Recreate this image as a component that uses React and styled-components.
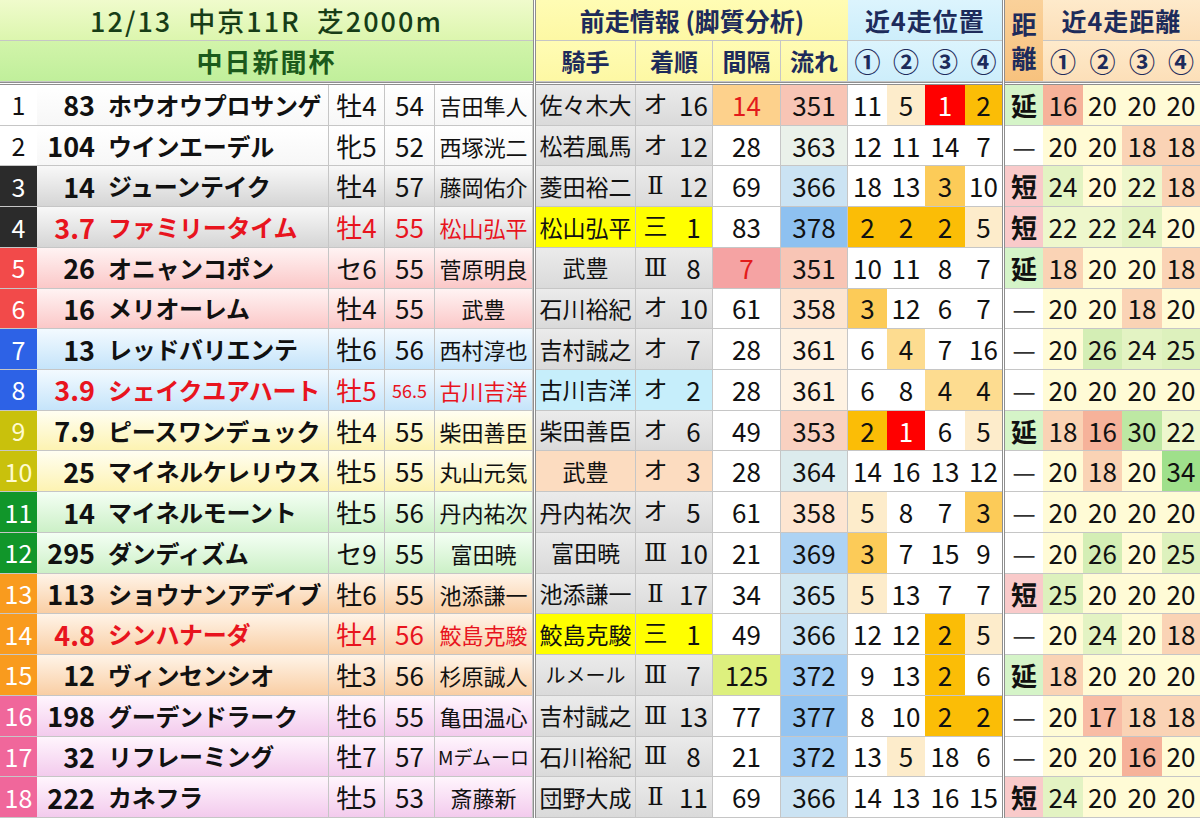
import React from 'react'
import styled, { createGlobalStyle } from 'styled-components'

const GlobalStyle = createGlobalStyle`
  html, body {
    margin: 0;
    padding: 0;
    background: #fff;
  }
  body {
    font-family: "Noto Sans CJK JP", "Noto Sans", sans-serif;
    color: #111;
  }
`

const LINE = '#c6c6c6'
const RED = '#e8141e'
const NAVY = '#1d2b5b'

const WAKU = {
  1: { box: '#ffffff', fg: '#111', row: 'linear-gradient(#ffffff, #f7f7f7)' },
  2: { box: '#2b2b2b', fg: '#fff', row: 'linear-gradient(#f8f8f8, #d5d5d5)' },
  3: { box: '#f24a4a', fg: '#fff', row: 'linear-gradient(#fff3f3, #fbc8c8)' },
  4: { box: '#2d62e6', fg: '#fff', row: 'linear-gradient(#f3faff, #c5e4fa)' },
  5: { box: '#c9c10c', fg: '#fffbd0', row: 'linear-gradient(#fffef2, #fdf3b2)' },
  6: { box: '#11962a', fg: '#fff', row: 'linear-gradient(#f4fff4, #ccf0c7)' },
  7: { box: '#f99b1e', fg: '#fff', row: 'linear-gradient(#fff4e8, #f9cea4)' },
  8: { box: '#f0679b', fg: '#fff', row: 'linear-gradient(#fff5fd, #f3cbed)' },
}

const PREV_BG = {
  gray: 'linear-gradient(#ebebeb, #dadada)',
  win: '#ffff00',
  blue: '#c6eefb',
  peach: '#fcdcc0',
}

const GAP_BG = {
  warm: '#fdd18c',
  hot: '#f5a3a3',
  lime: '#ddf07e',
}

const FLOW_BG = {
  351: '#f8c5b5', 353: '#f9d1c1', 358: '#fde5d1', 361: '#fef2e2', 363: '#eaf1ea',
  364: '#dcebed', 365: '#d2e7f1', 366: '#cbe3f3', 369: '#aed3f3', 372: '#a1ccf4',
  377: '#94c4f1', 378: '#8ec1f0',
}

const POS_BG = { 1: '#ff0000', 2: '#fbbd06', 3: '#fccb58', 4: '#fddc90', 5: '#fdeccb' }

const DIST_LABEL_BG = { '延': '#d5f4c8', '短': '#f9caca', '—': '#ffffff' }

const DIST_BG = {
  16: '#f6b29a', 17: '#f8bca5', 18: '#fad3b5', 20: '#fffbd6', 22: '#eef7cd',
  24: '#e3f3c3', 25: '#ddf1bd', 26: '#d4eeb5', 30: '#bde8a3', 34: '#9fe08b',
}

const HORSES = [
  { w: 1, odds: '83', name: 'ホウオウプロサンゲ', sex: '牡4', kg: '54', jockey: '吉田隼人', prev: '佐々木大', cls: 'オ', rank: '16', gap: '14', gapTone: 'warm', flow: 351, pos: [11, 5, 1, 2], dist: '延', dists: [16, 20, 20, 20] },
  { w: 1, odds: '104', name: 'ウインエーデル', sex: '牝5', kg: '52', jockey: '西塚洸二', prev: '松若風馬', cls: 'オ', rank: '12', gap: '28', flow: 363, pos: [12, 11, 14, 7], dist: '—', dists: [20, 20, 18, 18] },
  { w: 2, odds: '14', name: 'ジューンテイク', sex: '牡4', kg: '57', jockey: '藤岡佑介', prev: '菱田裕二', cls: 'Ⅱ', rank: '12', gap: '69', flow: 366, pos: [18, 13, 3, 10], dist: '短', dists: [24, 20, 22, 18] },
  { w: 2, odds: '3.7', fav: true, name: 'ファミリータイム', sex: '牡4', kg: '55', jockey: '松山弘平', prev: '松山弘平', prevTone: 'win', cls: '三', rank: '1', gap: '83', flow: 378, pos: [2, 2, 2, 5], dist: '短', dists: [22, 22, 24, 20] },
  { w: 3, odds: '26', name: 'オニャンコポン', sex: 'セ6', kg: '55', jockey: '菅原明良', prev: '武豊', cls: 'Ⅲ', rank: '8', gap: '7', gapTone: 'hot', flow: 351, pos: [10, 11, 8, 7], dist: '延', dists: [18, 20, 20, 18] },
  { w: 3, odds: '16', name: 'メリオーレム', sex: '牡4', kg: '55', jockey: '武豊', prev: '石川裕紀', cls: 'オ', rank: '10', gap: '61', flow: 358, pos: [3, 12, 6, 7], dist: '—', dists: [20, 20, 18, 20] },
  { w: 4, odds: '13', name: 'レッドバリエンテ', sex: '牡6', kg: '56', jockey: '西村淳也', prev: '吉村誠之', cls: 'オ', rank: '7', gap: '28', flow: 361, pos: [6, 4, 7, 16], dist: '—', dists: [20, 26, 24, 25] },
  { w: 4, odds: '3.9', fav: true, name: 'シェイクユアハート', sex: '牡5', kg: '56.5', jockey: '古川吉洋', prev: '古川吉洋', prevTone: 'blue', cls: 'オ', rank: '2', gap: '28', flow: 361, pos: [6, 8, 4, 4], dist: '—', dists: [20, 20, 20, 20] },
  { w: 5, odds: '7.9', name: 'ピースワンデュック', sex: '牡4', kg: '55', jockey: '柴田善臣', prev: '柴田善臣', cls: 'オ', rank: '6', gap: '49', flow: 353, pos: [2, 1, 6, 5], dist: '延', dists: [18, 16, 30, 22] },
  { w: 5, odds: '25', name: 'マイネルケレリウス', sex: '牡5', kg: '55', jockey: '丸山元気', prev: '武豊', prevTone: 'peach', cls: 'オ', rank: '3', gap: '28', flow: 364, pos: [14, 16, 13, 12], dist: '—', dists: [20, 18, 20, 34] },
  { w: 6, odds: '14', name: 'マイネルモーント', sex: '牡5', kg: '56', jockey: '丹内祐次', prev: '丹内祐次', cls: 'オ', rank: '5', gap: '61', flow: 358, pos: [5, 8, 7, 3], dist: '—', dists: [20, 20, 20, 20] },
  { w: 6, odds: '295', name: 'ダンディズム', sex: 'セ9', kg: '55', jockey: '富田暁', prev: '富田暁', cls: 'Ⅲ', rank: '10', gap: '21', flow: 369, pos: [3, 7, 15, 9], dist: '—', dists: [20, 26, 20, 25] },
  { w: 7, odds: '113', name: 'ショウナンアデイブ', sex: '牡6', kg: '55', jockey: '池添謙一', prev: '池添謙一', cls: 'Ⅱ', rank: '17', gap: '34', flow: 365, pos: [5, 13, 7, 7], dist: '短', dists: [25, 20, 20, 20] },
  { w: 7, odds: '4.8', fav: true, name: 'シンハナーダ', sex: '牡4', kg: '56', jockey: '鮫島克駿', prev: '鮫島克駿', prevTone: 'win', cls: '三', rank: '1', gap: '49', flow: 366, pos: [12, 12, 2, 5], dist: '—', dists: [20, 24, 20, 18] },
  { w: 7, odds: '12', name: 'ヴィンセンシオ', sex: '牡3', kg: '56', jockey: '杉原誠人', prev: 'ルメール', cls: 'Ⅲ', rank: '7', gap: '125', gapTone: 'lime', flow: 372, pos: [9, 13, 2, 6], dist: '延', dists: [18, 20, 20, 20] },
  { w: 8, odds: '198', name: 'グーデンドラーク', sex: '牡6', kg: '55', jockey: '亀田温心', prev: '吉村誠之', cls: 'Ⅲ', rank: '13', gap: '77', flow: 377, pos: [8, 10, 2, 2], dist: '—', dists: [20, 17, 18, 18] },
  { w: 8, odds: '32', name: 'リフレーミング', sex: '牡7', kg: '57', jockey: 'Mデムーロ', prev: '石川裕紀', cls: 'Ⅲ', rank: '8', gap: '21', flow: 372, pos: [13, 5, 18, 6], dist: '—', dists: [20, 20, 16, 20] },
  { w: 8, odds: '222', name: 'カネフラ', sex: '牡5', kg: '53', jockey: '斎藤新', prev: '団野大成', cls: 'Ⅱ', rank: '11', gap: '69', flow: 366, pos: [14, 13, 16, 15], dist: '短', dists: [24, 20, 20, 20] },
]

// waku | odds | name | sex | kg | jockey || prev | 着順 | 間隔 | 流れ | ①-④ || 距離 | ①-④
const Sheet = styled.div`
  display: grid;
  grid-template-columns:
    37px 63px 229px 56px 50px 98px 3px
    100px 77px 68px 67px 39px 38px 40px 37px 3px
    38px 40px 39px 40px 38px;
  grid-template-rows: 41px 41px 3px repeat(18, 1fr);
  width: 1200px;
  height: 818px;
  overflow: hidden;
`

const VSep = styled.div`
  grid-column: ${p => p.$col};
  grid-row: 1 / -1;
  box-sizing: border-box;
  border-left: 1px solid #8e8e8e;
  border-right: 1px solid #8e8e8e;
  background: #fff;
`

const HSep = styled.div`
  grid-column: 1 / -1;
  grid-row: 3;
  box-sizing: border-box;
  border-top: 1px solid #8e8e8e;
  border-bottom: 1px solid #8e8e8e;
  background: #fff;
`

const Cell = styled.div`
  display: flex;
  align-items: center;
  justify-content: ${p => p.$align || 'center'};
  box-sizing: border-box;
  border-bottom: 1px solid ${LINE};
  border-right: ${p => (p.$edge ? `1px solid ${LINE}` : 'none')};
  white-space: nowrap;
  overflow: hidden;
  line-height: 1;
  min-width: 0;
`

const Title = styled(Cell)`
  grid-column: span 6;
  background: ${p => (p.$sub ? 'linear-gradient(#d2f4aa, #c0ef9b)' : 'linear-gradient(#f0fbcc, #dcf6ae)')};
  color: ${p => (p.$sub ? '#1b5a1b' : '#173d17')};
  font-size: ${p => (p.$sub ? '26px' : '27px')};
  font-weight: ${p => (p.$sub ? 700 : 500)};
  letter-spacing: ${p => (p.$sub ? '2px' : '2px')};
  word-spacing: ${p => (p.$sub ? '0' : '8px')};
`

const Head = styled(Cell)`
  grid-column: span ${p => p.$span || 1};
  grid-row: span ${p => p.$rows || 1};
  flex-direction: ${p => (p.$stack ? 'column' : 'row')};
  justify-content: ${p => (p.$stack ? 'space-around' : 'center')};
  padding: ${p => (p.$stack ? '6px 0' : '0')};
  background: ${p => p.$bg};
  color: ${NAVY};
  font-size: ${p => p.$size || 24}px;
  font-weight: 700;
  letter-spacing: ${p => p.$track || 0}px;
`

const Waku = styled(Cell)`
  background: ${p => p.$bg};
  color: ${p => p.$fg};
  font-size: 25px;
`

const Odds = styled(Cell)`
  justify-content: flex-end;
  padding-right: 5px;
  background: ${p => p.$bg};
  color: ${p => (p.$fav ? RED : '#111')};
  font-size: 27px;
  font-weight: 700;
`

const HorseName = styled(Cell)`
  justify-content: flex-start;
  padding-left: 8px;
  border-right: 1px solid ${LINE};
  background: ${p => p.$bg};
  color: ${p => (p.$fav ? RED : '#111')};
  font-size: 24px;
  font-weight: 700;
  letter-spacing: -0.3px;
`

const Info = styled(Cell)`
  border-right: 1px solid ${LINE};
  background: ${p => p.$bg};
  color: ${p => (p.$fav ? RED : '#111')};
  font-size: ${p => p.$size || 26}px;
`

const PrevJockey = styled(Cell)`
  border-right: 1px solid ${LINE};
  background: ${p => p.$bg};
  font-size: ${p => p.$size || 23}px;
`

const Finish = styled(Cell)`
  display: grid;
  grid-template-columns: 39px 1fr;
  align-items: center;
  justify-items: center;
  border-right: 1px solid ${LINE};
  background: ${p => p.$bg};
  font-size: 26px;
`

const ClassMark = styled.span`
  font-family: "DejaVu Serif", "Noto Sans CJK JP", serif;
  font-size: 24px;
`

const Num = styled(Cell)`
  border-right: ${p => (p.$edge ? `1px solid ${LINE}` : 'none')};
  background: ${p => p.$bg || '#fff'};
  color: ${p => p.$fg || '#111'};
  font-size: 26px;
`

const DistLabel = styled(Cell)`
  background: ${p => p.$bg};
  font-size: 26px;
  font-weight: ${p => (p.$dash ? 400 : 700)};
  color: ${p => (p.$dash ? '#333' : '#111')};
`

function HorseRow({ h, no }) {
  const waku = WAKU[h.w]
  const prevBg = PREV_BG[h.prevTone || 'gray']
  const katakana = /^[ァ-ヶー]+$/.test(h.prev)
  return (
    <>
      <Waku $bg={waku.box} $fg={waku.fg}>{no}</Waku>
      <Odds $bg={waku.row} $fav={h.fav}>{h.odds}</Odds>
      <HorseName $bg={waku.row} $fav={h.fav}>{h.name}</HorseName>
      <Info $bg={waku.row} $fav={h.fav}>{h.sex}</Info>
      <Info $bg={waku.row} $fav={h.fav} $size={h.kg.length > 2 ? 18 : 26}>{h.kg}</Info>
      <Info $bg={waku.row} $fav={h.fav} $size={h.jockey.startsWith('M') ? 19 : 22}>{h.jockey}</Info>

      <PrevJockey $bg={prevBg} $size={katakana ? 20 : 23}>{h.prev}</PrevJockey>
      <Finish $bg={prevBg}>
        <ClassMark>{h.cls}</ClassMark>
        <span>{h.rank}</span>
      </Finish>
      <Num $edge $bg={GAP_BG[h.gapTone]} $fg={h.gapTone === 'warm' || h.gapTone === 'hot' ? '#e31b1b' : '#111'}>{h.gap}</Num>
      <Num $edge $bg={FLOW_BG[h.flow]}>{h.flow}</Num>
      {h.pos.map((p, i) => (
        <Num key={'p' + i} $bg={POS_BG[p]} $fg={p === 1 ? '#fff' : '#111'}>{p}</Num>
      ))}

      <DistLabel $bg={DIST_LABEL_BG[h.dist]} $dash={h.dist === '—'}>{h.dist}</DistLabel>
      {h.dists.map((d, i) => (
        <Num key={'d' + i} $bg={DIST_BG[d]}>{d}</Num>
      ))}
    </>
  )
}

export default function App() {
  const yellow = 'linear-gradient(#fffcb4, #fdf8a4)'
  const blue = 'linear-gradient(#dcf4fd, #cdeefb)'
  const peach = 'linear-gradient(#feeacb, #fcdfb8)'

  return (
    <>
      <GlobalStyle />
      <Sheet>
        <HSep />
        <VSep $col={7} />
        <VSep $col={16} />

        <Title>12/13 中京11R 芝2000m</Title>
        <Head $span={4} $bg={yellow} $size={25}>前走情報 (脚質分析)</Head>
        <Head $span={4} $bg={blue} $size={25} $track={1}>近4走位置</Head>
        <Head $rows={2} $bg="linear-gradient(#fad19a, #f7c27e)" $size={25} $stack>
          <span>距</span>
          <span>離</span>
        </Head>
        <Head $span={4} $bg={peach} $size={25} $track={1}>近4走距離</Head>

        <Title $sub>中日新聞杯</Title>
        <Head $edge $bg={yellow}>騎手</Head>
        <Head $edge $bg={yellow}>着順</Head>
        <Head $edge $bg={yellow}>間隔</Head>
        <Head $edge $bg={yellow}>流れ</Head>
        {['①', '②', '③', '④'].map(c => (
          <Head key={'hp' + c} $bg={blue} $size={26}>{c}</Head>
        ))}
        {['①', '②', '③', '④'].map(c => (
          <Head key={'hd' + c} $bg={peach} $size={26}>{c}</Head>
        ))}

        {HORSES.map((h, i) => (
          <HorseRow key={i} h={h} no={i + 1} />
        ))}
      </Sheet>
    </>
  )
}
